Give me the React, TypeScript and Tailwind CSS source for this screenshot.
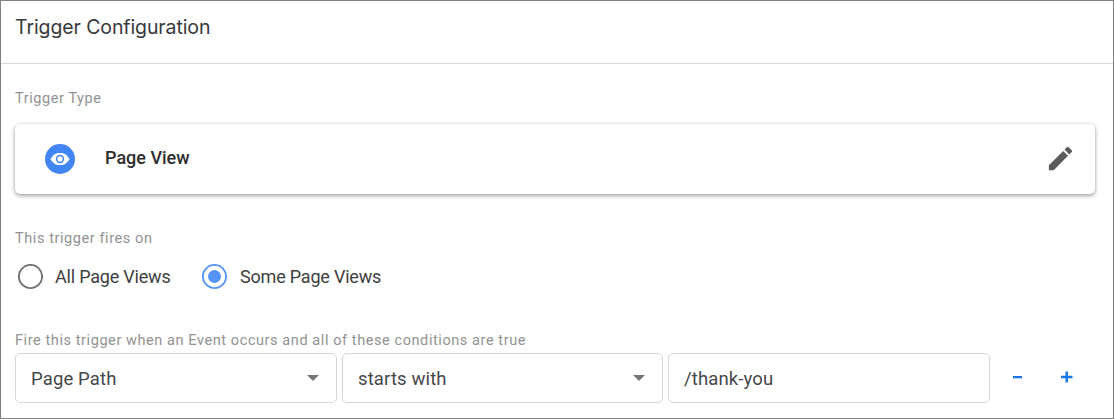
import type { ReactNode } from "react";

function Label({ children, className }: { children: ReactNode; className?: string }) {
  return (
    <div className={`h-5 text-[14.5px] leading-5 tracking-[0.58px] whitespace-nowrap text-[#929292] ${className ?? ""}`}>
      {children}
    </div>
  );
}

function Radio({ checked }: { checked?: boolean }) {
  return (
    <svg className="size-[26px] shrink-0" viewBox="0 0 26 26" fill="none" role="radio" aria-checked={!!checked}>
      <circle cx="13.5" cy="12.5" r="11.6" stroke={checked ? "#5594f6" : "#707070"} strokeWidth="1.9" />
      {checked && <circle cx="13.5" cy="12.5" r="6.5" fill="#5594f6" />}
    </svg>
  );
}

function Field({ children, select, className }: { children: ReactNode; select?: boolean; className: string }) {
  return (
    <div className={`flex h-[50px] shrink-0 items-center justify-between rounded-[5px] border border-[#d6d6d6] pl-[15px] text-[18.5px] tracking-[0.13px] text-[#44474b] ${className}`}>
      <span className="pt-[3px]">{children}</span>
      {select && (
        <svg className="mr-[17px] h-[6px] w-[12px]" viewBox="0 0 12 6" fill="#757575">
          <path d="M0 0h12L6 6z" />
        </svg>
      )}
    </div>
  );
}

export default function App() {
  return (
    <main className="h-[419px] w-[1114px] overflow-hidden border border-[#808080] bg-white font-['Roboto',sans-serif]">
      <header className="flex h-[63px] items-center border-b border-[#d8d8d8] px-3.5 pb-[10px]">
        <h1 className="font-['Inter',sans-serif] text-[19.5px] leading-6 tracking-[-0.1px] text-[#38393c]">
          Trigger Configuration
        </h1>
      </header>
      <section className="flex flex-col px-3.5 pt-[25px]">
        <Label>Trigger Type</Label>
        <div className="mt-[15px] flex h-[70px] w-[1080px] items-center rounded-[5px] pr-[19px] pl-[30px] shadow-[0_2px_4px_rgba(0,0,0,0.32),0_0_3px_rgba(0,0,0,0.16)]">
          <svg className="size-[30px]" viewBox="0 0 30 30">
            <circle cx="15" cy="15" r="15" fill="#4285f4" />
            <path d="M5.4 15C8 11 10.5 9 13 9h4c2.5 0 5 2 7.6 6-2.6 4-5.1 6-7.6 6h-4c-2.5 0-5-2-7.6-6z" fill="white" />
            <circle cx="15" cy="15" r="3.4" fill="white" stroke="#4285f4" strokeWidth="1.5" />
          </svg>
          <span className="ml-[30px] flex-1 pb-[3px] text-[18px] font-medium text-[#2e2e2e]">Page View</span>
          <svg className="mb-px size-[31px]" viewBox="0 0 24 24" fill="#5b5b5b">
            <path d="M3 17.25V21h3.75L17.81 9.94l-3.75-3.75L3 17.25zM20.71 7.04a1 1 0 0 0 0-1.41l-2.34-2.34a1 1 0 0 0-1.41 0l-1.83 1.83 3.75 3.75 1.83-1.83z" />
          </svg>
        </div>
        <Label className="mt-[35px]">This trigger fires on</Label>
        <div className="mt-[15px] flex h-[26px] items-center pl-[2px] text-[18px] tracking-[-0.2px] text-[#404040]">
          <Radio />
          <span className="ml-3 w-[146px] pb-[2px]">All Page Views</span>
          <Radio checked />
          <span className="ml-[13px] pb-[2px]">Some Page Views</span>
        </div>
        <Label className="mt-[41px]">
          Fire this trigger when an Event occurs and all of these conditions are true
        </Label>
        <div className="mt-[2px] flex items-center">
          <Field select className="w-[322px]">Page Path</Field>
          <Field select className="ml-[5px] w-[321px]">starts with</Field>
          <Field className="ml-[5px] w-[322px]">/thank-you</Field>
          <svg className="mb-px ml-[22px] size-3" viewBox="0 0 12 12" fill="#1a73e8">
            <path d="M1 4h9v2.3H1z" />
          </svg>
          <svg className="mb-[2px] ml-[37px] size-3" viewBox="0 0 12 12" fill="#1a73e8">
            <path d="M4.5 .5h2.4v4.3h4.6v2.4H6.9v4.3H4.5V7.2H0V4.8h4.5z" />
          </svg>
        </div>
      </section>
    </main>
  );
}
